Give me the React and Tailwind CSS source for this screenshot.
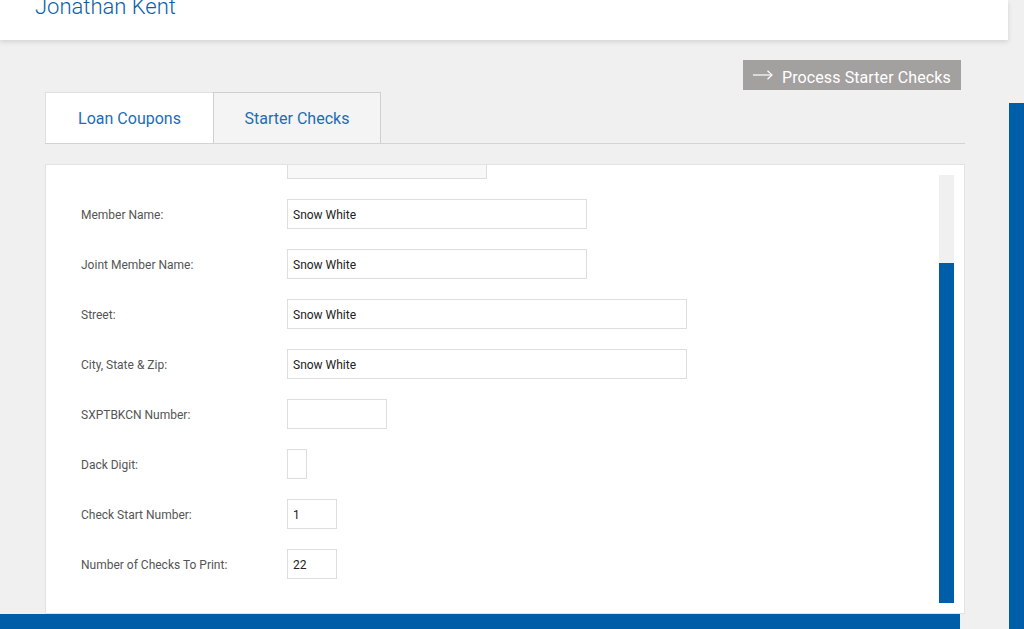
import React from 'react';

const rows = [
  { label: '', value: '', width: 'w-[200px]', bg: 'bg-[#f8f8f8]' },
  { label: 'Member Name:', value: 'Snow White', width: 'w-[300px]' },
  { label: 'Joint Member Name:', value: 'Snow White', width: 'w-[300px]' },
  { label: 'Street:', value: 'Snow White', width: 'w-[400px]' },
  { label: 'City, State & Zip:', value: 'Snow White', width: 'w-[400px]' },
  { label: 'SXPTBKCN Number:', value: '', width: 'w-[100px]' },
  { label: 'Dack Digit:', value: '', width: 'w-[20px]' },
  { label: 'Check Start Number:', value: '1', width: 'w-[50px]' },
  { label: 'Number of Checks To Print:', value: '22', width: 'w-[50px]' },
];

const FormRow = ({ label, value, width, bg }) => (
  <div className="flex items-center h-[30px]">
    <label className="w-[206px] shrink-0 pt-[2px] text-[12px] text-[#555]">{label}</label>
    <input
      type="text"
      defaultValue={value}
      className={`${width} ${bg || 'bg-white'} h-[30px] border border-[#dedede] px-[5px] pt-[2px] text-[12px] text-[#222] outline-none`}
    />
  </div>
);

const App = () => {
  return (
    <div
      className="w-[1024px] h-[629px] flex bg-[#f0f0f0] overflow-hidden"
      style={{ fontFamily: 'Roboto, "Liberation Sans", sans-serif' }}
    >
      <div className="w-[1008px] flex flex-col">
        <header className="h-[40px] shrink-0 bg-white shadow-[0_2px_5px_rgba(0,0,0,0.12)] pl-[35px] relative z-10">
          <h1 className="-mt-[4px] text-[22px] leading-none font-light text-[#0a5fab]">Jonathan Kent</h1>
        </header>

        <div className="pl-[45px] w-[965px]">
          <div className="flex justify-end mt-[20px] pr-[4px]">
            <button className="h-[30px] w-[218px] bg-[#a3a19f] text-white text-[16px] flex items-center pl-[10px] gap-[9px]">
              <svg width="20" height="10" viewBox="0 0 20 10" fill="none" stroke="white" strokeWidth="1.2">
                <path d="M0 5h19" />
                <path d="M14.5 0.8L19 5l-4.5 4.2" />
              </svg>
              <span className="mt-[5px] tracking-[0.1px]">Process Starter Checks</span>
            </button>
          </div>

          <div className="mt-[2px] flex border-b border-[#d3d3d3]">
            <div className="w-[168px] h-[51px] pt-[2px] bg-white border-t border-l border-[#e0e0e0] flex items-center justify-center text-[16px] text-[#1f6db3]">
              Loan Coupons
            </div>
            <div className="w-[168px] h-[51px] pt-[2px] bg-[#f4f4f4] border-t border-l border-r border-[#cfcfcf] flex items-center justify-center text-[16px] text-[#1f6db3]">
              Starter Checks
            </div>
          </div>

          <div className="mt-[20px] h-[450px] bg-white border border-[#e3e3e3] flex">
            <div className="flex-1 overflow-hidden">
              <div className="-mt-[16px] pl-[35px] flex flex-col gap-[20px]">
                {rows.map((r, i) => (
                  <FormRow key={i} {...r} />
                ))}
              </div>
            </div>
            <div className="w-[15px] my-[10px] mr-[10px] flex flex-col">
              <div className="h-[88px] bg-[#f0f0f0]" />
              <div className="flex-1 bg-[#005ea8]" />
            </div>
          </div>
        </div>

        <div className="h-[15px] w-[960px] bg-[#005ea8]" />
      </div>

      <div className="w-[16px] pt-[103px] flex">
        <div className="flex-1 ml-px bg-[#005ea8]" />
      </div>
    </div>
  );
};

export default App;
